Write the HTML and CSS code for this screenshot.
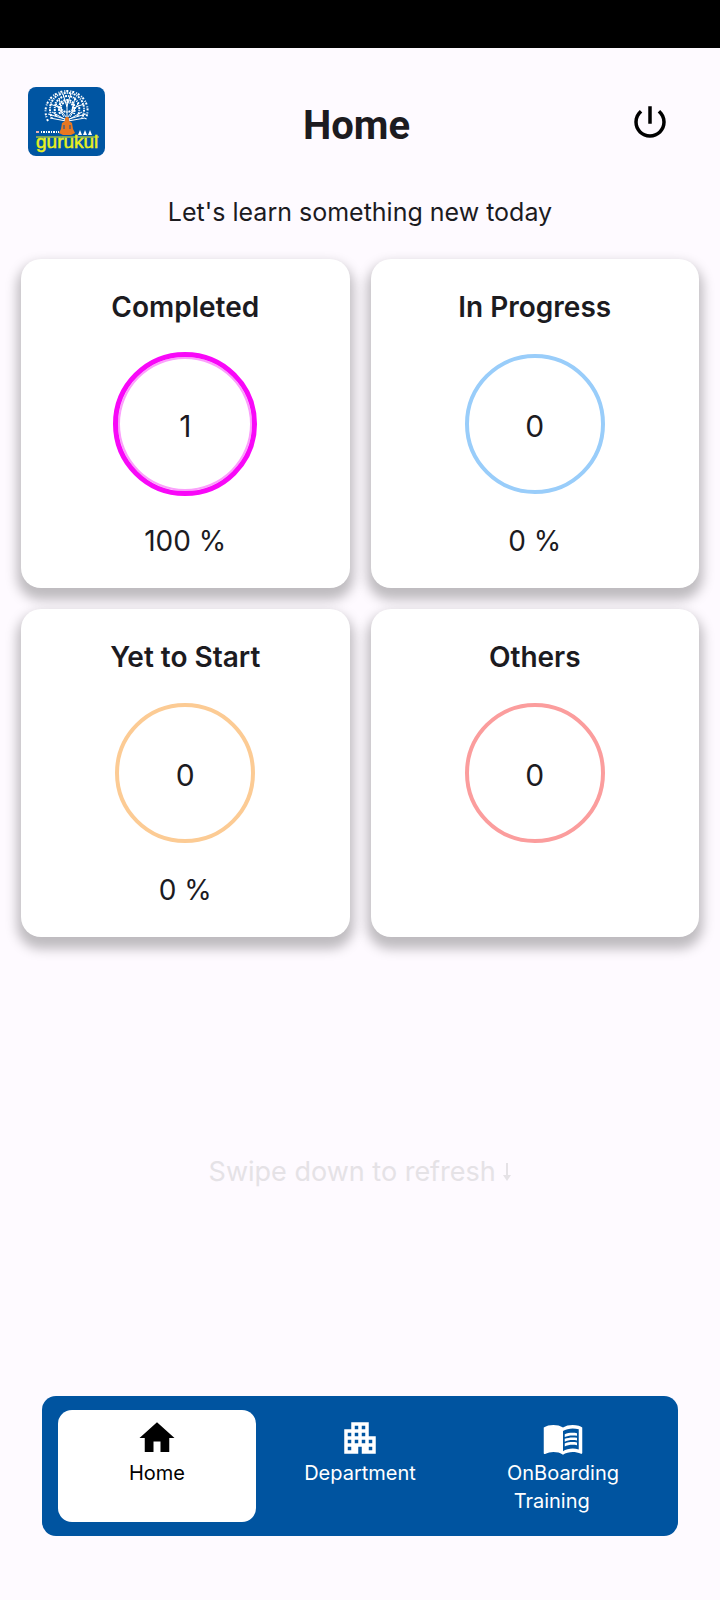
FILE: index.html
```html
<!DOCTYPE html>
<html lang="en">
<head>
    <meta charset="UTF-8">
    <meta name="viewport" content="width=device-width, initial-scale=1.0">
    <title>Home</title>
    <link rel="stylesheet" href="styles.css">
</head>
<body>
    <div class="status-bar"></div>

    <header class="header">
        <svg class="logo" viewBox="0 0 77 69" role="img" aria-label="gurukul">
            <rect width="77" height="69" rx="8" fill="#0055a2"/>
            <!-- Tree -->
            <g fill="none" stroke="#fff">
                <path stroke-width="1" d="M39 33V15M39 31L30 20M39 31L48 20M38 33L24 25M40 33L54 25M38 34L22 31M40 34L57 31M34 25L31 11M44 25L47 10M30 20L22 17M48 20L56 17M39 20L35 7M39 19L43 6M36 30L27 15M42 30L51 15M37 32L20 27M41 32L58 27"/>
                <ellipse cx="39" cy="20" rx="6" ry="5" stroke-width="2" stroke-dasharray="2 1 1 1"/>
                <path stroke-width="2" stroke-dasharray="2 1 1 1" d="M28 29C24 18 30 9 39 9S54 18 50 29"/>
                <path stroke-width="2" stroke-dasharray="1 1 2 1" d="M24 31C18 18 26 6 39 6S60 18 54 31"/>
                <path stroke-width="2" stroke-dasharray="2 2 1 1" d="M20 34C12 18 25 4 39 4S65 18 57 33"/>
                <path stroke-width="2" stroke-dasharray="2 1" d="M32 27C29 18 33 13 39 13S48 18 46 27"/>
            </g>
            <!-- Sitting figure -->
            <path fill="#e87722" d="M37 32C37 29 41 29 41 32L41 34L44 36L45 42L47 46L43 48H35L31 46L33 42L34 36L37 34Z"/>
            <path fill="none" stroke="#0055a2" d="M36 38V42M42 38V42"/>
            <path fill="none" stroke="#fff" stroke-width="2" stroke-dasharray="1 1 2 1" d="M13 45H31"/>
            <path fill="none" stroke="#e8b0b0" stroke-width="2" d="M8 45H11"/>
            <path fill="#fff" d="M50 48L52 43L54 48ZM55 48L57 43L59 48ZM60 48L62 43L64 48Z"/>
            <path stroke="#e8f01e" d="M8 50H71"/>
            <text x="8" y="61" class="logo-text">gurukul</text>
        </svg>
        <h1>Home</h1>
        <button type="button" class="power" aria-label="Log out">
            <svg class="icon" viewBox="0 0 24 24"><path d="M13 3h-2v10h2V3zm4.83 2.17l-1.42 1.42C17.99 7.86 19 9.81 19 12c0 3.87-3.13 7-7 7s-7-3.13-7-7c0-2.19 1.01-4.14 2.58-5.42L6.17 5.17C4.23 6.82 3 9.26 3 12c0 4.97 4.03 9 9 9s9-4.03 9-9c0-2.74-1.23-5.18-3.17-6.83z"/></svg>
        </button>
    </header>

    <main>
        <p class="tagline">Let's learn something new today</p>

        <section class="cards">
            <div class="card">
                <h2>Completed</h2>
                <div class="ring completed">1</div>
                <p class="percent">100 %</p>
            </div>
            <div class="card">
                <h2>In Progress</h2>
                <div class="ring progress">0</div>
                <p class="percent">0 %</p>
            </div>
            <div class="card">
                <h2>Yet to Start</h2>
                <div class="ring pending">0</div>
                <p class="percent">0 %</p>
            </div>
            <div class="card">
                <h2>Others</h2>
                <div class="ring others">0</div>
                <p class="percent"></p>
            </div>
        </section>

        <p class="refresh">Swipe down to refresh
            <svg class="arrow" viewBox="0 0 8 18"><path d="M3 0h2v12h3l-4 6-4-6h3z"/></svg>
        </p>
    </main>

    <nav class="tabs">
        <a href="#home" class="tab active">
            <svg class="icon" viewBox="0 0 24 24"><path d="M10 20v-6h4v6h5v-8h3L12 3 2 12h3v8z"/></svg>
            <span>Home</span>
        </a>
        <a href="#department" class="tab">
            <svg class="icon" viewBox="0 0 24 24"><path d="M17 11V3H7v4H3v14h8v-4h2v4h8V11h-4zM7 19H5v-2h2v2zm0-4H5v-2h2v2zm0-4H5V9h2v2zm4 4H9v-2h2v2zm0-4H9V9h2v2zm0-4H9V5h2v2zm4 8h-2v-2h2v2zm0-4h-2V9h2v2zm0-4h-2V5h2v2zm4 12h-2v-2h2v2zm0-4h-2v-2h2v2z"/></svg>
            <span>Department</span>
        </a>
        <a href="#training" class="tab">
            <svg class="icon" viewBox="0 0 24 24"><path d="M21 5c-1.11-.35-2.33-.5-3.5-.5-1.95 0-4.05.4-5.5 1.5-1.45-1.1-3.55-1.5-5.5-1.5S2.45 4.9 1 6v14.65c0 .25.25.5.5.5.1 0 .15-.05.25-.05C3.1 20.45 5.05 20 6.5 20c1.95 0 4.05.4 5.5 1.5 1.35-.85 3.8-1.5 5.5-1.5 1.65 0 3.35.3 4.75 1.05.1.05.15.05.25.05.25 0 .5-.25.5-.5V6c-.6-.45-1.25-.75-2-1zm0 13.5c-1.1-.35-2.3-.5-3.5-.5-1.7 0-4.15.65-5.5 1.5V8c1.35-.85 3.8-1.5 5.5-1.5 1.2 0 2.4.15 3.5.5v11.5z"/><path d="M17.5 10.5c.88 0 1.73.09 2.5.26V9.24c-.79-.15-1.64-.24-2.5-.24-1.7 0-3.24.29-4.5.83v1.66c1.13-.64 2.7-.99 4.5-.99zM13 12.49v1.66c1.13-.64 2.7-.99 4.5-.99.88 0 1.73.09 2.5.26V11.9c-.79-.15-1.64-.24-2.5-.24-1.7 0-3.24.3-4.5.83zM17.5 14.33c-1.7 0-3.24.29-4.5.83v1.66c1.13-.64 2.7-.99 4.5-.99.88 0 1.73.09 2.5.26v-1.52c-.79-.16-1.64-.24-2.5-.24z"/></svg>
            <span>OnBoarding
Training    </span>
        </a>
    </nav>
</body>
</html>
```
FILE: styles.css
```css
* {
    box-sizing: border-box;
}

body {
    margin: 0;
    min-height: 100vh;
    display: flex;
    flex-direction: column;
    background-color: #fefaff;
    color: #1c1b1f;
    font-family: Inter, sans-serif;
}

h1, h2, p {
    margin: 0;
}

.status-bar {
    height: 48px;
    background-color: #000;
}

.header {
    display: grid;
    grid-template-columns: 1fr auto 1fr;
    align-items: center;
    padding: 39px 35px 34px 28px;
}

.logo {
    width: 77px;
    height: 69px;
}

.logo-text {
    fill: #e8f01e;
    stroke: #e8f01e;
    stroke-width: 0.5;
    font-family: "Liberation Sans", sans-serif;
    font-size: 19px;
}

h1 {
    padding-top: 8px;
    font-family: Roboto, sans-serif;
    font-size: 40px;
    font-weight: 700;
    line-height: 48px;
}

.power {
    justify-self: end;
    margin-right: 14px;
    padding: 0;
    border: none;
    background: none;
    color: #000;
    cursor: pointer;
}

.icon {
    display: block;
    width: 42px;
    height: 42px;
    fill: currentColor;
}

main {
    flex: 1;
    display: flex;
    flex-direction: column;
    padding-bottom: 14px;
}

.tagline {
    font-size: 25px;
    line-height: 44px;
    text-align: center;
}

.cards {
    display: grid;
    grid-template-columns: 1fr 1fr;
    gap: 21px;
    padding: 25px 21px;
}

.card {
    aspect-ratio: 1;
    display: flex;
    flex-direction: column;
    align-items: center;
    justify-content: space-between;
    padding: 28px 16px 27px;
    border-radius: 20px;
    background-color: #fff;
    box-shadow: 0 8px 12px 4px rgba(0, 0, 0, 0.25);
}

h2 {
    font-size: 28px;
    font-weight: 600;
    line-height: 40px;
}

.ring {
    width: 140px;
    height: 140px;
    display: flex;
    align-items: center;
    justify-content: center;
    padding-top: 4px;
    border: 4px solid;
    border-radius: 50%;
    font-size: 30px;
}

.ring.completed {
    width: 144px;
    height: 144px;
    border: 5px solid #f808f8;
    box-shadow: inset 0 0 0 2px #fba0fb;
}

.ring.progress {
    border-color: #99cdfa;
}

.ring.pending {
    border-color: #fccb94;
}

.ring.others {
    border-color: #fb9d9d;
}

.percent {
    height: 40px;
    font-size: 28px;
    line-height: 40px;
}

.refresh {
    margin: auto 0;
    color: #e5e2e6;
    font-size: 27px;
    line-height: 40px;
    text-align: center;
}

.arrow {
    width: 8px;
    height: 18px;
    fill: currentColor;
}

.tabs {
    display: grid;
    grid-template-columns: repeat(3, 1fr);
    gap: 5px;
    margin: 0 42px 64px;
    padding: 14px 16px;
    border-radius: 14px;
    background-color: #0054a0;
}

.tab {
    display: flex;
    flex-direction: column;
    align-items: center;
    padding: 7px 0;
    border-radius: 14px;
    color: #fff;
    font-size: 20px;
    line-height: 28px;
    text-align: center;
    text-decoration: none;
    white-space: pre;
}

.tab.active {
    background-color: #fff;
    color: #000;
}
```
